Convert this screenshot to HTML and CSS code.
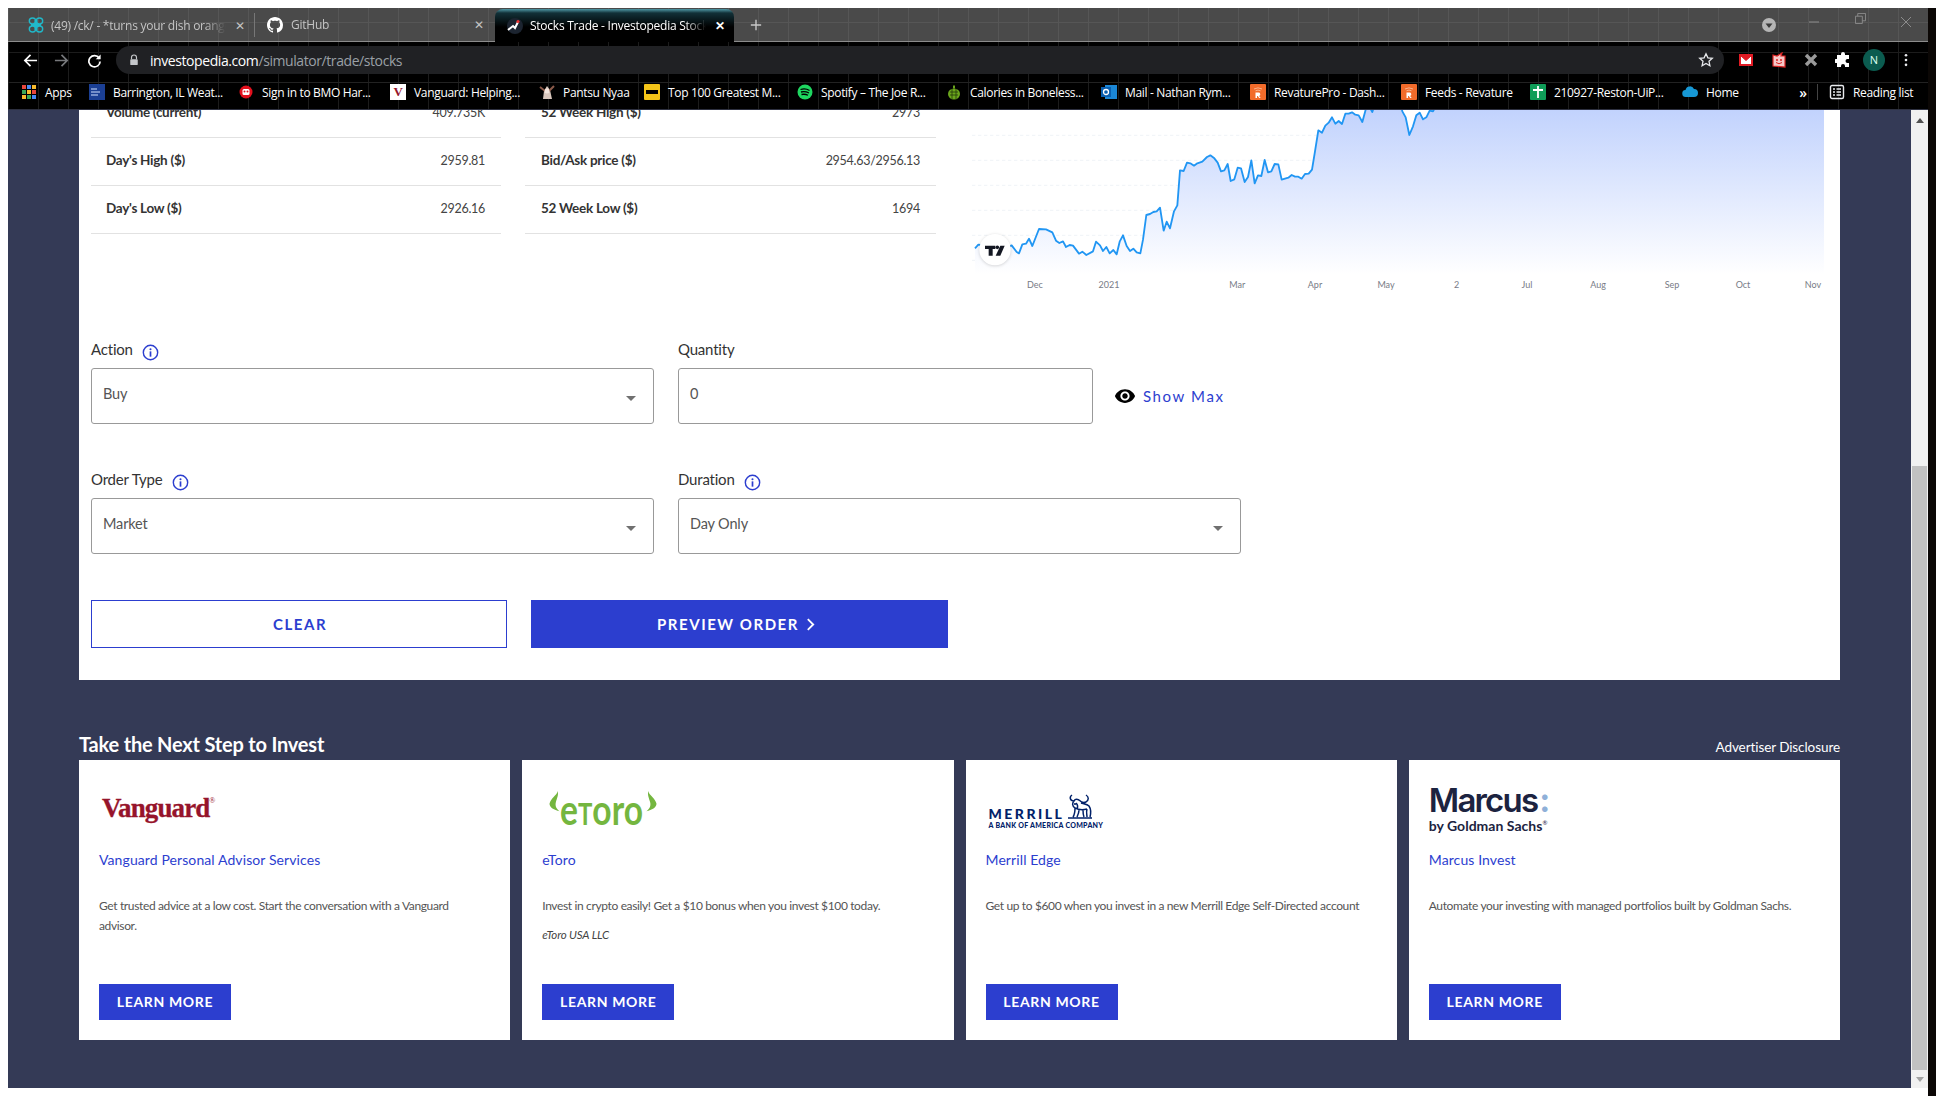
FILE: index.html
```html
<!DOCTYPE html>
<html lang="en">
<head>
<meta charset="utf-8">
<title>Stocks Trade - Investopedia Stock Simulator</title>
<link rel="stylesheet" href="styles.css">
</head>
<body>
<svg class="defs" width="0" height="0" aria-hidden="true">
  <symbol id="info" viewBox="0 0 18 18"><circle cx="9" cy="9" r="7.6" fill="none" stroke="#2c3ecf" stroke-width="1.5"/><circle cx="9" cy="5.6" r="1.1" fill="#2c3ecf"/><rect x="8.1" y="7.8" width="1.8" height="5.6" fill="#2c3ecf"/></symbol>
  <symbol id="rfav" viewBox="0 0 16 16"><rect width="16" height="16" rx="1" fill="#f26b2a"/><path d="M4 5a8 8 0 0 1 8 0M5.5 6.8a5 5 0 0 1 5 0" fill="none" stroke="#f9b48f" stroke-width="1"/><path d="M5.5 14V8.5h3a1.8 1.8 0 0 1 .6 3.5l1.6 2H9.2l-1.4-1.9H7V14z" fill="#fff"/></symbol>
</svg>
<div class="browser">
  <div class="tabstrip">
    <div class="tab tab-one">
      <svg class="fav" viewBox="0 0 16 16"><g fill="none" stroke="#21b8c9" stroke-width="1.4"><ellipse cx="4.500" cy="4" rx="3.200" ry="3"/><ellipse cx="11.500" cy="4" rx="3.200" ry="3"/><ellipse cx="4.500" cy="12" rx="3.200" ry="3"/><ellipse cx="11.500" cy="12" rx="3.200" ry="3"/></g><g fill="#21b8c9"><rect x="6.500" y="3" width="3" height="10"/><rect x="3" y="7" width="10" height="2"/></g></svg>
      <span class="tab-title">(49) /ck/ - *turns your dish orange*</span>
      <span class="tab-x">✕</span>
    </div>
    <div class="tab tab-two">
      <svg class="fav" viewBox="0 0 16 16"><path fill="#fff" d="M8 0C3.58 0 0 3.58 0 8c0 3.54 2.29 6.53 5.47 7.59.4.07.55-.17.55-.38 0-.19-.01-.82-.01-1.49-2.01.37-2.53-.49-2.69-.94-.09-.23-.48-.94-.82-1.13-.28-.15-.68-.52-.01-.53.63-.01 1.08.58 1.23.82.72 1.21 1.87.87 2.33.66.07-.52.28-.87.51-1.07-1.78-.2-3.64-.89-3.64-3.95 0-.87.31-1.59.82-2.15-.08-.2-.36-1.02.08-2.12 0 0 .67-.21 2.2.82.64-.18 1.32-.27 2-.27.68 0 1.36.09 2 .27 1.53-1.04 2.2-.82 2.2-.82.44 1.1.16 1.92.08 2.12.51.56.82 1.27.82 2.15 0 3.07-1.87 3.75-3.65 3.95.29.25.54.73.54 1.48 0 1.07-.01 1.93-.01 2.2 0 .21.15.46.55.38A8.013 8.013 0 0016 8c0-4.42-3.58-8-8-8z"/></svg>
      <span class="tab-title">GitHub</span>
      <span class="tab-x">✕</span>
    </div>
    <div class="tab tab-active">
      <svg class="fav" viewBox="0 0 16 16"><circle cx="8" cy="8" r="8" fill="#1c2430"/><path d="M1 12l5-4 2 2 3-6" fill="none" stroke="#fff" stroke-width="2"/><circle cx="11" cy="3.5" r="1.6" fill="#e33"/></svg>
      <span class="tab-title">Stocks Trade - Investopedia Stock Simulator</span>
      <span class="tab-x tab-x-active">✕</span>
    </div>
    <svg class="newtab" viewBox="0 0 14 14"><path d="M7 1v12M1 7h12" stroke="#c8c8c8" stroke-width="1.6"/></svg>
    <div class="winctl">
      <svg class="win-caret" viewBox="0 0 14 14"><circle cx="7" cy="7" r="7" fill="#b5b5b5"/><path d="M3.5 5.5h7L7 10z" fill="#3a3a3a"/></svg>
      <svg class="win-min" viewBox="0 0 12 12"><path d="M1 6h10" stroke="#8c8c8c"/></svg>
      <svg class="win-max" viewBox="0 0 12 12"><path d="M.5 3.5h7.5v8H.5zM3 3.5V.5h8.5v8H8" fill="none" stroke="#8c8c8c"/></svg>
      <svg class="win-close" viewBox="0 0 12 12"><path d="M1 1l10 10M11 1L1 11" stroke="#8c8c8c"/></svg>
    </div>
  </div>

  <div class="toolbar">
    <svg class="nav nav-back" viewBox="0 0 16 16"><path d="M15 8H2M8 2L2 8l6 6" fill="none" stroke="#fff" stroke-width="1.8"/></svg>
    <svg class="nav nav-fwd" viewBox="0 0 16 16"><path d="M1 8h13M8 2l6 6-6 6" fill="none" stroke="#77797c" stroke-width="1.8"/></svg>
    <svg class="nav nav-reload" viewBox="0 0 16 16"><path d="M13 5.5A6 6 0 1 0 14 9" fill="none" stroke="#fff" stroke-width="1.8"/><path d="M14.5 1.5v5.2H9.3z" fill="#fff"/></svg>
    <div class="omnibox">
      <svg class="lock" viewBox="0 0 12 14"><path d="M3 6V4a3 3 0 0 1 6 0v2" fill="none" stroke="#c5c7ca" stroke-width="1.4"/><rect x="1.5" y="6" width="9" height="7" rx="1" fill="#c5c7ca"/></svg>
      <span class="url"><span class="url-host">investopedia.com</span>/simulator/trade/stocks</span>
      <svg class="star" viewBox="0 0 16 16"><path d="M8 1.8l1.9 4 4.4.5-3.3 3 .9 4.4L8 11.5l-3.9 2.2.9-4.4-3.3-3 4.4-.5z" fill="none" stroke="#e8eaed" stroke-width="1.3"/></svg>
    </div>
    <div class="ext">
      <svg class="ext-icon" viewBox="0 0 16 16"><rect x="1" y="2" width="14" height="12" fill="#e01b24"/><path d="M3 4l5 4.5L13 4v8H3z" fill="#fff"/><path d="M3 4l5 4.5L13 4" fill="none" stroke="#e01b24"/></svg>
      <svg class="ext-icon" viewBox="0 0 16 16"><path d="M2 3l4 1 5-3-1 3 4 0v11l-12-1z" fill="#f5c8c8" stroke="#d22" stroke-width="1.2"/><circle cx="6" cy="8" r="1" fill="#d22"/><circle cx="10" cy="8" r="1" fill="#d22"/><path d="M5 10.5q3 2.5 6 0" fill="none" stroke="#d22"/></svg>
      <svg class="ext-icon" viewBox="0 0 16 16"><path d="M3 3l10 10M13 3L3 13" stroke="#9a9a9a" stroke-width="3.4"/></svg>
      <svg class="ext-icon ext-puzzle" viewBox="0 0 16 16"><path d="M6 2a2 2 0 0 1 4 0v1h4v4h-1.500a2 2 0 0 0 0 4H14v4H10v-1a2 2 0 0 0-4 0v1H2v-4H1a2 2 0 0 1 0-4h1V3h4z" fill="#fff"/></svg>
      <span class="avatar">N</span>
      <svg class="ext-dots" viewBox="0 0 4 16"><circle cx="2" cy="2.500" r="1.500" fill="#e8eaed"/><circle cx="2" cy="8" r="1.500" fill="#e8eaed"/><circle cx="2" cy="13.500" r="1.500" fill="#e8eaed"/></svg>
    </div>
  </div>

  <div class="bookmarks">
    <a class="bm bm-a">
      <svg class="fav" viewBox="0 0 16 16"><g><rect x="1" y="1" width="4" height="4" fill="#e8453c"/><rect x="6" y="1" width="4" height="4" fill="#4a8af4"/><rect x="11" y="1" width="4" height="4" fill="#f9bb2d"/><rect x="1" y="6" width="4" height="4" fill="#3aa757"/><rect x="6" y="6" width="4" height="4" fill="#f9bb2d"/><rect x="11" y="6" width="4" height="4" fill="#e8453c"/><rect x="1" y="11" width="4" height="4" fill="#f9bb2d"/><rect x="6" y="11" width="4" height="4" fill="#3aa757"/><rect x="11" y="11" width="4" height="4" fill="#4a8af4"/></g></svg>Apps</a>
    <a class="bm bm-b"><svg class="fav" viewBox="0 0 16 16"><rect width="16" height="16" fill="#1b3f94"/><path d="M2 5h6M2 8h9M2 11h7" stroke="#cfe0ff"/></svg>Barrington, IL Weat...</a>
    <a class="bm bm-c"><svg class="fav" viewBox="0 0 16 16"><circle cx="8" cy="8" r="6.500" fill="#e3101d"/><rect x="4.500" y="5" width="7" height="6" rx="1.500" fill="#fff"/><circle cx="6.500" cy="7.500" r="1" fill="#e3101d"/><circle cx="9.500" cy="7.500" r="1" fill="#e3101d"/></svg>Sign in to BMO Har...</a>
    <a class="bm bm-d"><span class="bm-v">V</span>Vanguard: Helping...</a>
    <a class="bm bm-e"><svg class="fav" viewBox="0 0 16 16"><path d="M4 15l1-8 3-5 3 4 2 9z" fill="#d9c7bd"/><path d="M1 3l5 4M15 2l-5 5" stroke="#8b5a4a" stroke-width="2"/><circle cx="8" cy="7" r="2.500" fill="#f3e5de"/></svg>Pantsu Nyaa</a>
    <a class="bm bm-f"><svg class="fav" viewBox="0 0 16 16"><rect width="16" height="16" rx="1" fill="#f5c518"/><rect x="2" y="6" width="12" height="4" fill="#000"/></svg>Top 100 Greatest M...</a>
    <a class="bm bm-g"><svg class="fav" viewBox="0 0 16 16"><circle cx="8" cy="8" r="7.500" fill="#1ed760"/><path d="M3.500 5.500q5-1.500 9 1M4 8q4-1 8 1M4.500 10.500q3.500-.8 6.500.8" fill="none" stroke="#000" stroke-width="1.300"/></svg>Spotify – The Joe R...</a>
    <a class="bm bm-h"><svg class="fav" viewBox="0 0 16 16"><ellipse cx="8" cy="10" rx="6" ry="5.500" fill="#6aa51c"/><path d="M4 8h8M4 11h8M6 5v10M10 5v10" stroke="#23380a" stroke-width=".8"/><path d="M7 4.500V1.500h2v3" fill="#6aa51c"/></svg>Calories in Boneless...</a>
    <a class="bm bm-i"><svg class="fav" viewBox="0 0 16 16"><rect x="4" y="1" width="12" height="14" fill="#1b87d6"/><rect y="3" width="10" height="10" fill="#0a5fb0"/><circle cx="5" cy="8" r="2.500" fill="none" stroke="#fff" stroke-width="1.300"/></svg>Mail - Nathan Rym...</a>
    <a class="bm bm-j"><svg class="fav"><use href="#rfav"/></svg>RevaturePro - Dash...</a>
    <a class="bm bm-k"><svg class="fav"><use href="#rfav"/></svg>Feeds - Revature</a>
    <a class="bm bm-l"><svg class="fav" viewBox="0 0 16 16"><rect width="16" height="16" rx="1" fill="#0f9d58"/><path d="M8 2v12M3 6h10" stroke="#fff" stroke-width="1.800"/></svg>210927-Reston-UiP...</a>
    <a class="bm bm-m"><svg class="fav" viewBox="0 0 16 16"><path d="M4 13a3.500 3.500 0 0 1-.5-7A4.500 4.500 0 0 1 12 5a4 4 0 0 1 0 8z" fill="#1798d5"/></svg>Home</a>
    <span class="bm-more">»</span>
    <span class="bm-sep"></span>
    <a class="bm bm-read"><svg class="fav" viewBox="0 0 16 16"><rect x="1.500" y="1.500" width="13" height="13" rx="1.500" fill="none" stroke="#e8eaed" stroke-width="1.400"/><path d="M4 5h2M7.500 5H12M4 8h2M7.500 8H12M4 11h2M7.500 11H12" stroke="#e8eaed" stroke-width="1.300"/></svg>Reading list</a>
  </div>

  <div class="viewport">
    <main class="page">
      <section class="panel">
        <div class="quote">
          <div class="stats">
            <div class="stat"><span class="stat-k">Volume (current)</span><span class="stat-v">409.735K</span></div>
            <div class="stat"><span class="stat-k">Day's High ($)</span><span class="stat-v">2959.81</span></div>
            <div class="stat"><span class="stat-k">Day's Low ($)</span><span class="stat-v">2926.16</span></div>
          </div>
          <div class="stats">
            <div class="stat"><span class="stat-k">52 Week High ($)</span><span class="stat-v">2973</span></div>
            <div class="stat"><span class="stat-k">Bid/Ask price ($)</span><span class="stat-v">2954.63/2956.13</span></div>
            <div class="stat"><span class="stat-k">52 Week Low ($)</span><span class="stat-v">1694</span></div>
          </div>
          <svg class="chart" viewBox="0 0 2562 564">
            <defs><linearGradient id="area" gradientUnits="userSpaceOnUse" x1="0" y1="0" x2="0" y2="500"><stop offset="0" stop-color="#c1d2fd"/><stop offset="1" stop-color="#ffffff"/></linearGradient></defs>
            <g class="gridlines">
              <path d="M6 82H2562M6 157H2562M6 232H2562M6 307H2562M6 382H2562M6 457H2562"/>
            </g>
            <polygon fill="url(#area)" points="15,421 25,410 50,412 80,425 110,418 125,412 140,432 147,436 157,409 168,407 177,392 187,414 207,363 228,364 247,373 258,398 268,405 279,400 288,417 299,411 309,413 327,437 337,431 349,441 369,430 378,401 390,412 399,429 409,417 419,436 430,426 440,439 449,401 459,382 470,414 480,429 490,422 500,433 511,436 519,395 529,321 540,318 550,312 560,310 570,299 581,368 590,341 600,361 612,310 622,292 630,187 641,189 651,164 661,166 672,173 682,166 697,161 711,147 721,142 733,151 743,164 753,190 763,187 773,168 782,219 793,214 803,179 813,181 824,222 834,207 844,157 854,226 864,202 874,204 884,156 894,193 904,190 914,168 925,169 935,215 955,209 965,201 975,206 985,206 995,212 1005,198 1016,197 1026,185 1035,130 1045,67 1056,74 1066,53 1076,44 1086,28 1096,47 1106,39 1116,48 1126,17 1136,17 1146,13 1156,20 1166,22 1177,42 1187,5 1197,-5 1207,12 1217,-20 1290,-20 1297,10 1307,28 1318,81 1329,55 1339,22 1349,14 1359,34 1369,28 1379,8 1389,10 1400,-10 2562,-60 2562,500 15,500"/>
            <polyline class="line" points="15,421 25,410 50,412 80,425 110,418 125,412 140,432 147,436 157,409 168,407 177,392 187,414 207,363 228,364 247,373 258,398 268,405 279,400 288,417 299,411 309,413 327,437 337,431 349,441 369,430 378,401 390,412 399,429 409,417 419,436 430,426 440,439 449,401 459,382 470,414 480,429 490,422 500,433 511,436 519,395 529,321 540,318 550,312 560,310 570,299 581,368 590,341 600,361 612,310 622,292 630,187 641,189 651,164 661,166 672,173 682,166 697,161 711,147 721,142 733,151 743,164 753,190 763,187 773,168 782,219 793,214 803,179 813,181 824,222 834,207 844,157 854,226 864,202 874,204 884,156 894,193 904,190 914,168 925,169 935,215 955,209 965,201 975,206 985,206 995,212 1005,198 1016,197 1026,185 1035,130 1045,67 1056,74 1066,53 1076,44 1086,28 1096,47 1106,39 1116,48 1126,17 1136,17 1146,13 1156,20 1166,22 1177,42 1187,5 1197,-5 1207,12 1217,-20 1290,-20 1297,10 1307,28 1318,81 1329,55 1339,22 1349,14 1359,34 1369,28 1379,8 1389,10 1400,-10"/>
            <circle class="tv-badge" cx="75" cy="425" r="47"/>
            <path d="M45 413h31v10H68v20H56V423H45z" fill="#131722"/>
            <circle cx="82" cy="418" r="5.500" fill="#131722"/>
            <path d="M91 413h13l-13 30H77z" fill="#131722"/>
            <g class="axis">
              <text x="195" y="541">Dec</text><text x="417" y="541">2021</text><text x="802" y="541">Mar</text><text x="1035" y="541">Apr</text><text x="1248" y="541">May</text><text x="1460" y="541">2</text><text x="1671" y="541">Jul</text><text x="1884" y="541">Aug</text><text x="2106" y="541">Sep</text><text x="2319" y="541">Oct</text><text x="2529" y="541">Nov</text>
            </g>
          </svg>
        </div>

        <div class="form-row">
          <div class="field-group wide">
            <label class="label">Action<svg class="info"><use href="#info"/></svg></label>
            <div class="control"><span>Buy</span><i class="caret"></i></div>
          </div>
          <div class="field-group qty">
            <label class="label">Quantity</label>
            <div class="control"><span>0</span></div>
          </div>
          <a class="show-max">
            <svg class="eye" viewBox="0 0 24 24"><path d="M12 4.500C7 4.500 2.730 7.610 1 12c1.730 4.390 6 7.500 11 7.500s9.270-3.110 11-7.500c-1.730-4.390-6-7.500-11-7.500zM12 17c-2.760 0-5-2.240-5-5s2.240-5 5-5 5 2.240 5 5-2.240 5-5 5zm0-8c-1.660 0-3 1.340-3 3s1.340 3 3 3 3-1.340 3-3-1.340-3-3-3z"/></svg>
            Show Max
          </a>
        </div>
        <div class="form-row">
          <div class="field-group wide">
            <label class="label">Order Type<svg class="info"><use href="#info"/></svg></label>
            <div class="control"><span>Market</span><i class="caret"></i></div>
          </div>
          <div class="field-group dur">
            <label class="label">Duration<svg class="info"><use href="#info"/></svg></label>
            <div class="control"><span>Day Only</span><i class="caret"></i></div>
          </div>
        </div>
        <div class="actions">
          <button class="btn btn-clear">CLEAR</button>
          <button class="btn btn-preview">PREVIEW ORDER<svg class="chev" viewBox="0 0 8 12"><path d="M1.500 1l5 5-5 5" fill="none" stroke="#fff" stroke-width="1.700"/></svg></button>
        </div>
      </section>

      <div class="next-head">
        <h2 class="next-title">Take the Next Step to Invest</h2>
        <a class="disclosure">Advertiser Disclosure</a>
      </div>
      <div class="offers">
        <article class="offer">
          <div class="logo"><span class="lg-vanguard">Vanguard<sup>®</sup></span></div>
          <a class="offer-title">Vanguard Personal Advisor Services</a>
          <p class="offer-desc">Get trusted advice at a low cost. Start the conversation with a Vanguard advisor.</p>
          <a class="learn">LEARN MORE</a>
        </article>
        <article class="offer">
          <div class="logo">
            <span class="lg-etoro">
              <svg class="horn horn-l" viewBox="0 0 12 24"><path d="M9 0C8 5 1 8 0 14c0 4 5 7 11 8-4-3-5-6-4-10 1-4 3-7 2-12z"/></svg>
              <span class="etoro-text">e<small>T</small>oro</span>
              <svg class="horn horn-r" viewBox="0 0 12 24"><path d="M3 0c1 5 8 8 9 14 0 4-5 7-11 8 4-3 5-6 4-10-1-4-3-7-2-12z"/></svg>
            </span>
          </div>
          <a class="offer-title">eToro</a>
          <p class="offer-desc">Invest in crypto easily! Get a $10 bonus when you invest $100 today.</p>
          <p class="offer-fine">eToro USA LLC</p>
          <a class="learn">LEARN MORE</a>
        </article>
        <article class="offer">
          <div class="logo">
            <div class="lg-merrill">
              <div class="merrill-top"><span class="merrill-name">MERRILL</span>
                <svg class="bull" viewBox="0 0 26 26"><g fill="none" stroke="#012169" stroke-width="1.500"><path d="M5 1C2 3 3 7 7 7c1-2 3-2 5-1M19 1c3 2 3 5 0 7-2 1-5 0-7-2M7 7c-2 2-2 5 1 7 0 3 0 6-2 9M9 9c2 2 2 4 1 6M14 9c3 1 6 1 8 3 2 3 2 7 1 11M8 14c4 2 8 2 12 1M12 16c0 3-1 5-2 7M16 16c0 3 0 5 1 7M20 15c-1 3 0 6 0 8M1 24h24"/></g><circle cx="8" cy="10" r="1.100" fill="#012169"/></svg>
              </div>
              <div class="merrill-sub">A BANK OF AMERICA COMPANY</div>
            </div>
          </div>
          <a class="offer-title">Merrill Edge</a>
          <p class="offer-desc">Get up to $600 when you invest in a new Merrill Edge Self-Directed account</p>
          <a class="learn">LEARN MORE</a>
        </article>
        <article class="offer">
          <div class="logo">
            <div class="lg-marcus">
              <div class="marcus-name">Marcus<span class="marcus-colon">:</span></div>
              <div class="marcus-sub">by Goldman Sachs<sup>®</sup></div>
            </div>
          </div>
          <a class="offer-title">Marcus Invest</a>
          <p class="offer-desc">Automate your investing with managed portfolios built by Goldman Sachs.</p>
          <a class="learn">LEARN MORE</a>
        </article>
      </div>
    </main>
    <div class="scrollbar">
      <span class="sb-up"></span>
      <span class="sb-thumb"></span>
      <span class="sb-down"></span>
    </div>
  </div>
</div>
<div class="desk"></div>
</body>
</html>
```
FILE: styles.css
```css
* { box-sizing: border-box; }
html, body { margin: 0; height: 100%; }
body {
  width: 1936px; height: 1096px; overflow: hidden; background: #fff;
  padding: 8px 0 0 8px; display: flex; align-items: flex-start;
  font-family: "Lato", "Liberation Sans", sans-serif; color: #333;
}
.defs { position: absolute; }
.browser { width: 1920px; height: 1080px; display: flex; flex-direction: column; overflow: hidden; }
.desk { width: 8px; height: 1088px; background: #0b0705; }

.tabstrip {
  height: 34px; display: flex; flex: none; position: relative; border-bottom: 1px solid #8c8c8c;
  background-color: #4a4a4a;
  background-image: linear-gradient(#565656 1px, transparent 1px), linear-gradient(90deg, #565656 1px, transparent 1px);
  background-size: 30px 30px; background-position: 0 14px;
  font-family: "Open Sans", sans-serif;
}
.tab { height: 33px; display: flex; align-items: center; font-size: 12px; color: #c4c4c4; letter-spacing: -.25px; }
.tab-one { width: 247px; padding-left: 20px; border-right: 1px solid #777; height: 24px; margin-top: 5px; }
.tab-one .tab-title { margin-left: 7px; }
.tab-two { width: 240px; padding: 0 2px 0 12px; }
.tab-active {
  width: 239px; padding-left: 12px; color: #fff; margin-top: 1px; height: 33px; border-radius: 8px 8px 0 0;
  background: linear-gradient(#4f98a6, #123138 4px, #000 18px);
}
.fav { width: 16px; height: 16px; flex: none; }
.tab-title { margin-left: 8px; flex: 1; min-width: 0; white-space: nowrap; overflow: hidden; -webkit-mask-image: linear-gradient(90deg, #000 88%, transparent); mask-image: linear-gradient(90deg, #000 88%, transparent); }
.tab-active .tab-title { margin-left: 7px; }
.tab-x { width: 28px; text-align: center; font-size: 12px; color: #c4c4c4; flex: none; }
.tab-x-active { color: #fff; font-weight: 700; }
.newtab { width: 12px; height: 12px; margin: 11px 0 0 16px; }
.winctl { margin-left: auto; display: flex; align-items: flex-start; padding-right: 16px; }
.win-caret { width: 14px; height: 14px; margin-top: 10px; }
.win-min { width: 12px; height: 12px; margin: 8px 0 0 32px; }
.win-max { width: 11px; height: 11px; margin: 5px 0 0 35px; }
.win-close { width: 12px; height: 12px; margin: 8px 0 0 34px; }

.toolbar {
  height: 40px; display: flex; align-items: center; flex: none; position: relative; background-color: #000; padding-bottom: 4px;
  background-image: linear-gradient(#1c1c1c 1px, transparent 1px), linear-gradient(90deg, #1c1c1c 1px, transparent 1px);
  background-size: 30px 30px; background-position: 0 10px;
}
.nav { width: 15px; height: 15px; flex: none; }
.nav-back { margin-left: 15px; }
.nav-fwd { margin-left: 16px; }
.nav-reload { margin-left: 18px; }
.omnibox {
  margin-left: 14px; width: 1608px; height: 28px; border-radius: 14px; background: #202124;
  display: flex; align-items: center; padding-left: 13px;
}
.lock { width: 10px; height: 12px; flex: none; }
.url { margin-left: 11px; font: 14px "Open Sans", sans-serif; letter-spacing: -.42px; color: #9aa0a6; }
.url-host { color: #fff; }
.star { width: 16px; height: 16px; margin-left: auto; margin-right: 10px; }
.ext { display: flex; align-items: center; margin-left: 14px; }
.ext-icon { width: 16px; height: 16px; margin-right: 16px; }
.ext-icon:first-child { margin-right: 17px; }
.ext-icon.ext-puzzle { margin-right: 12px; }
.avatar { width: 22px; height: 22px; border-radius: 50%; background: #0b5c50; color: #dfe; font: 11px/22px "Open Sans", sans-serif; text-align: center; }
.ext-dots { width: 4px; height: 14px; margin-left: 19px; }

.bookmarks {
  height: 28px; display: flex; align-items: center; flex: none; padding: 0 0 8px 13px; background-color: #000;
  background-image: linear-gradient(90deg, #1c1c1c 1px, transparent 1px);
  background-size: 30px 30px; border-top: 1px solid #222; border-bottom: 1px solid #2d3040;
  font: 12px "Open Sans", sans-serif; letter-spacing: -.33px; color: #fff;
}
.bm { display: flex; align-items: center; gap: 8px; white-space: nowrap; flex: none; color: #fff; }
.bm-a { width: 68px; } .bm-b { width: 149px; } .bm-c { width: 152px; } .bm-d { width: 149px; }
.bm-e { width: 105px; } .bm-f { width: 153px; } .bm-g { width: 149px; } .bm-h { width: 155px; }
.bm-i { width: 149px; } .bm-j { width: 151px; } .bm-k { width: 129px; } .bm-l { width: 152px; }
.bm-m { width: 70px; }
.bm-v { width: 16px; height: 16px; background: #fff; color: #96142b; font: bold 13px/16px "Liberation Serif", serif; text-align: center; flex: none; }
.bm-more { margin-left: 45px; width: 12px; font-size: 14px; font-weight: 600; text-align: center; }
.bm-sep { width: 1px; height: 16px; background: #444; margin-left: 8px; }
.bm-read { margin-left: 11px; }

.viewport { flex: 1; min-height: 0; display: flex; background: #343a56; }
.page { width: 1903px; padding: 0 71px; overflow: hidden; }
.panel { margin-top: -20px; background: #fff; padding: 0 12px 32px; }
.quote { height: 250px; display: flex; align-items: flex-start; }
.stats { width: 410px; flex: none; margin-right: 24px; }
.stats + .stats { width: 411px; margin-right: 34px; }
.stat {
  height: 48px; padding: 0 16px 3px 15px; display: flex; align-items: center; justify-content: space-between;
  border-bottom: 1px solid #e2e2e2; font-size: 13.500px; letter-spacing: -.28px;
}
.stats + .stats .stat { padding-left: 16px; }
.stat-k { font-weight: 700; color: #333; }
.stat-v { color: #444; font-size: 12.500px; }
.chart { width: 854px; height: 188px; margin-top: 18px; flex: none; overflow: visible; }
.gridlines path { stroke: #edf0f5; stroke-width: 2.500; stroke-dasharray: 10 8; fill: none; }
.line { fill: none; stroke: #2196f3; stroke-width: 5.500; stroke-linejoin: round; }
.tv-badge { fill: #fff; filter: drop-shadow(0 2px 5px rgba(0,0,0,.18)); }
.axis text { font-size: 27px; fill: #787b86; text-anchor: middle; }

.form-row { display: flex; align-items: flex-end; gap: 24px; }
.form-row + .form-row { margin-top: 46px; }
.field-group { display: flex; flex-direction: column; gap: 8px; flex: none; }
.wide { width: 563px; } .qty { width: 415px; } .dur { width: 563px; }
.label { height: 20px; display: flex; align-items: center; font-size: 15px; color: #333; letter-spacing: -.2px; padding-bottom: 2px; }
.info { width: 17px; height: 17px; margin: 7px 0 0 9px; }
.control {
  height: 56px; border: 1px solid #999; border-radius: 3px; background: #fff; display: flex; justify-content: space-between;
  padding: 16px 17px 0 11px; font-size: 14.500px; line-height: 18px; color: #555; letter-spacing: -.15px;
}
.caret { width: 0; height: 0; border: 5px solid transparent; border-top: 5px solid #707070; border-bottom: 0; margin-top: 11px; }
.show-max { display: flex; align-items: center; height: 56px; margin-left: -3px; color: #2c3ecf; font-size: 15px; letter-spacing: 1.600px; gap: 7px; }
.eye { width: 22px; height: 22px; fill: #000; flex: none; }

.actions { display: flex; gap: 24px; margin-top: 46px; }
.btn {
  height: 48px; font: 700 15px "Lato", sans-serif; letter-spacing: 1.550px; border: 1px solid #2c3ecf;
  display: flex; align-items: center; justify-content: center; padding: 0;
}
.btn-clear { width: 416px; background: #fff; color: #2c3ecf; padding-left: 2px; }
.btn-preview { width: 417px; background: #2c3ecf; color: #fff; padding-right: 7px; }
.chev { width: 9px; height: 13px; margin-left: 7px; }

.next-head { display: flex; justify-content: space-between; align-items: flex-end; margin-top: 49px; height: 31px; }
.next-title { margin: 0 0 1px; font-size: 20px; line-height: 30px; font-weight: 700; color: #fff; letter-spacing: -.2px; }
.disclosure { font-size: 13.500px; line-height: 26px; color: #fff; letter-spacing: -.08px; margin-left: -1px; }
.offers { display: grid; grid-template-columns: repeat(4, 1fr); gap: 12px; }
.offer { height: 280px; background: #fff; padding: 8px 20px 20px; display: flex; flex-direction: column; align-items: flex-start; }
.logo { height: 82px; width: 100%; flex: none; display: flex; align-items: center; }
.offer-title { font-size: 14px; line-height: 20px; color: #2c3ecf; letter-spacing: .1px; }
.offer-desc { margin: 26px 0 0; max-width: 378px; font-size: 12px; line-height: 20px; color: #555; letter-spacing: -.36px; }
.offer-fine { margin: 13px 0 0; font-size: 11.500px; line-height: 12px; font-style: italic; color: #444; letter-spacing: -.15px; }
.learn {
  margin-top: auto; height: 36px; background: #2c3ecf; color: #fff; font-size: 14px; font-weight: 700; letter-spacing: .65px;
  display: flex; align-items: center; justify-content: center; width: 132px; padding-bottom: 1px;
}

.lg-vanguard { font: 700 27px "Liberation Serif", serif; letter-spacing: -.9px; color: #96142b; margin: 0 0 2px 3px; -webkit-text-stroke: .3px #96142b; }
.lg-vanguard sup { font-size: 8px; font-weight: 400; vertical-align: 14px; line-height: 0; -webkit-text-stroke: 0; }
.lg-etoro { display: flex; align-items: flex-end; color: #74b63f; margin-left: 7px; height: 44px; }
.horn { width: 12px; height: 22px; fill: #74b63f; flex: none; }
.horn-l { margin: 0 0 18px 0; }
.horn-r { margin: 0 0 18px -1px; }
.etoro-text { width: 86px; font-size: 42px; line-height: 44px; font-weight: 700; white-space: nowrap; display: block; transform: translateY(4px) scaleX(.8); transform-origin: 0 50%; margin-left: -1px; }
.etoro-text small { font-size: 30px; }
.lg-merrill { margin: 5px 0 0 3px; color: #012169; }
.merrill-top { display: flex; align-items: flex-end; gap: 5px; }
.merrill-name { font-size: 14px; line-height: 12px; font-weight: 900; letter-spacing: 2.500px; }
.bull { width: 26px; height: 26px; margin-left: -2px; }
.merrill-sub { font-size: 7px; line-height: 10px; font-weight: 900; letter-spacing: .28px; margin-top: 0; white-space: nowrap; }
.lg-marcus { margin: 0; color: #1c2340; }
.marcus-name { font: 600 33px/33px "Inter", sans-serif; letter-spacing: -1.800px; }
.marcus-colon { color: #8fb0d8; margin-left: 2px; font-weight: 700; }
.marcus-sub { font-size: 14px; line-height: 18px; font-weight: 700; letter-spacing: .02px; }
.marcus-sub sup { font-size: 6px; font-weight: 400; vertical-align: 6px; line-height: 0; }

.scrollbar { width: 17px; background: #f1f1f1; position: relative; display: flex; flex-direction: column; align-items: center; }
.sb-up { width: 0; height: 0; border: 4px solid transparent; border-bottom: 5px solid #505050; border-top: 0; margin-top: 8px; }
.sb-thumb { position: absolute; top: 356px; left: 1px; right: 1px; height: 604px; background: #c1c1c1; }
.sb-down { width: 0; height: 0; border: 4px solid transparent; border-top: 5px solid #a3a3a3; border-bottom: 0; margin-top: auto; margin-bottom: 6px; }
```
